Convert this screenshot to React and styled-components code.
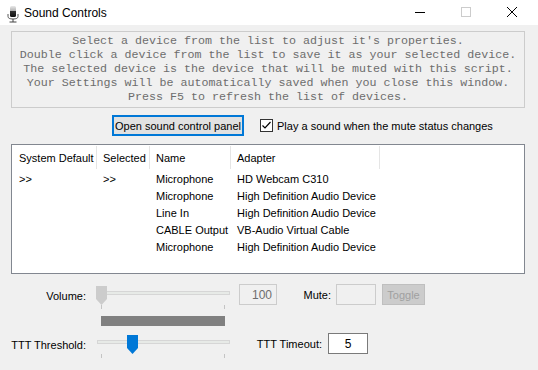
import React from 'react'
import styled, { createGlobalStyle } from 'styled-components'

const GlobalStyle = createGlobalStyle`
    body {
        margin: 0;
        background: #f0f0f0;
        font-family: "Liberation Sans", Arial, sans-serif;
        font-size: 11px;
        color: #000000;
    }
`

const devices = [
    { systemDefault: '>>', selected: '>>', name: 'Microphone', adapter: 'HD Webcam C310' },
    { systemDefault: '', selected: '', name: 'Microphone', adapter: 'High Definition Audio Device' },
    { systemDefault: '', selected: '', name: 'Line In', adapter: 'High Definition Audio Device' },
    { systemDefault: '', selected: '', name: 'CABLE Output', adapter: 'VB-Audio Virtual Cable' },
    { systemDefault: '', selected: '', name: 'Microphone', adapter: 'High Definition Audio Device' },
]

const infoLines = [
    "Select a device from the list to adjust it's properties.",
    'Double click a device from the list to save it as your selected device.',
    'The selected device is the device that will be muted with this script.',
    'Your Settings will be automatically saved when you close this window.',
    'Press F5 to refresh the list of devices.',
]

const MicIcon = () => (
    <svg width="16" height="18" viewBox="0 0 16 18">
        <defs>
            <linearGradient id="cap" x1="0" y1="0" x2="0" y2="1">
                <stop offset="0" stopColor="#e8e8e8" />
                <stop offset="0.45" stopColor="#b0b0b0" />
                <stop offset="0.5" stopColor="#303030" />
                <stop offset="1" stopColor="#101010" />
            </linearGradient>
        </defs>
        <rect x="5" y="1" width="6" height="11" rx="1.5" fill="url(#cap)" />
        <path d="M3 9 V11.5 Q3 14 8 14 Q13 14 13 11.5 V9" fill="none" stroke="#555" strokeWidth="1" />
        <path d="M8 14 V17 M4.5 17 H11.5" stroke="#444" strokeWidth="1" />
    </svg>
)

const Thumb = ({ disabled }) => (
    <svg width="11" height="19" viewBox="0 0 11 19">
        <polygon points="0,0 11,0 11,13 5.5,19 0,13" fill={disabled ? '#cccccc' : '#0078d7'} />
    </svg>
)

const Slider = ({ value, disabled }) => (
    <SliderBox>
        <Track />
        <ThumbHolder style={{ left: `${value * 123}px` }}>
            <Thumb disabled={disabled} />
        </ThumbHolder>
        <Tick $pos={5} />
        <Tick $pos={128} />
    </SliderBox>
)

const App = () => {
    return (
        <Window>
            <GlobalStyle />
            <TitleBar>
                <TitleIcon><MicIcon /></TitleIcon>
                <Title>Sound Controls</Title>
                <Caption>
                    <CaptionButton>
                        <svg width="10" height="10"><path d="M0 5.5 H10" stroke="#000" /></svg>
                    </CaptionButton>
                    <CaptionButton>
                        <svg width="10" height="10"><rect x="0.5" y="0.5" width="9" height="9" fill="none" stroke="#cccccc" /></svg>
                    </CaptionButton>
                    <CaptionButton>
                        <svg width="10" height="10"><path d="M0 0 L10 10 M10 0 L0 10" stroke="#000" /></svg>
                    </CaptionButton>
                </Caption>
            </TitleBar>

            <Body>
                <InfoBox>
                    {infoLines.map(line => <div key={line}>{line}</div>)}
                </InfoBox>

                <Toolbar>
                    <PanelButton>Open sound control panel</PanelButton>
                    <CheckLabel>
                        <CheckBox>
                            <svg width="11" height="11" viewBox="0 0 11 11">
                                <path d="M1.5 5.5 L4 8 L9.5 2" fill="none" stroke="#000" strokeWidth="1.2" />
                            </svg>
                        </CheckBox>
                        Play a sound when the mute status changes
                    </CheckLabel>
                </Toolbar>

                <DeviceList>
                    <HeaderRow>
                        <HeaderCell>System Default</HeaderCell>
                        <HeaderCell>Selected</HeaderCell>
                        <HeaderCell>Name</HeaderCell>
                        <HeaderCell>Adapter</HeaderCell>
                    </HeaderRow>
                    {devices.map((d, i) => (
                        <DeviceRow key={i}>
                            <Cell>{d.systemDefault}</Cell>
                            <Cell>{d.selected}</Cell>
                            <Cell>{d.name}</Cell>
                            <Cell>{d.adapter}</Cell>
                        </DeviceRow>
                    ))}
                </DeviceList>

                <Controls>
                    <ControlRow>
                        <FieldLabel>Volume:</FieldLabel>
                        <Slider value={0} disabled />
                        <NumberBox $disabled $width={38} $ml={8}>100</NumberBox>
                        <InlineLabel $width={54}>Mute:</InlineLabel>
                        <NumberBox $disabled $width={40} $ml={5} />
                        <ToggleButton>Toggle</ToggleButton>
                    </ControlRow>
                    <LevelBar />
                    <ControlRow>
                        <FieldLabel>TTT Threshold:</FieldLabel>
                        <Slider value={0.25} />
                        <InlineLabel $width={91}>TTT Timeout:</InlineLabel>
                        <NumberBox $width={40} $ml={6} $center>5</NumberBox>
                    </ControlRow>
                </Controls>
            </Body>
        </Window>
    )
}

export default App

const Window = styled.div`
    width: 538px;
    height: 370px;
    display: flex;
    flex-direction: column;
    background: #f0f0f0;
    overflow: hidden;
    white-space: nowrap;
`

const TitleBar = styled.div`
    height: 25px;
    background: #ffffff;
    display: flex;
    align-items: center;
`

const TitleIcon = styled.div`
    width: 16px;
    height: 18px;
    margin-left: 5px;
    margin-top: 2px;
`

const Title = styled.div`
    margin-left: 3px;
    font-size: 12px;
`

const Caption = styled.div`
    margin-left: auto;
    display: flex;
    height: 100%;
    margin-right: 3px;
`

const CaptionButton = styled.div`
    width: 46px;
    display: flex;
    align-items: center;
    justify-content: center;
    padding-bottom: 2px;
`

const Body = styled.div`
    display: flex;
    flex-direction: column;
    padding: 6px 12px 0 11px;
`

const InfoBox = styled.div`
    width: 512px;
    border: 1px solid #cccccc;
    padding: 2px 0 3px;
    font-family: "Liberation Mono", "Courier New", monospace;
    font-size: 11.67px;
    line-height: 14px;
    color: #6d6d6d;
    text-align: center;
    white-space: pre;
`

const Toolbar = styled.div`
    display: flex;
    align-items: center;
    margin-top: 7px;
    padding-left: 101px;
    height: 21px;
`

const PanelButton = styled.div`
    box-sizing: border-box;
    width: 132px;
    height: 21px;
    border: 2px solid #0078d7;
    background: #e1e1e1;
    display: flex;
    align-items: center;
    justify-content: center;
`

const CheckLabel = styled.label`
    display: flex;
    align-items: center;
    margin-left: 16px;
    gap: 4px;
`

const CheckBox = styled.span`
    box-sizing: border-box;
    width: 13px;
    height: 13px;
    border: 1px solid #333333;
    background: #ffffff;
    display: flex;
    align-items: center;
    justify-content: center;
`

const DeviceList = styled.div`
    box-sizing: border-box;
    margin-top: 8px;
    width: 514px;
    height: 130px;
    border: 1px solid #828790;
    background: #ffffff;
    padding-left: 1px;
`

const columns = '84px 53px 81px 149px'

const HeaderRow = styled.div`
    display: grid;
    grid-template-columns: ${columns};
    height: 25px;
    align-items: stretch;
`

const HeaderCell = styled.div`
    display: flex;
    align-items: center;
    padding-left: 6px;
    margin-top: 1px;
    margin-bottom: 1px;
    border-right: 1px solid #e5e5e5;
`

const DeviceRow = styled.div`
    display: grid;
    grid-template-columns: ${columns};
    height: 17px;
    align-items: center;
`

const Cell = styled.div`
    padding-left: 6px;
`

const Controls = styled.div`
    display: flex;
    flex-direction: column;
    margin-top: 10px;
    margin-left: -11px;
`

const ControlRow = styled.div`
    display: flex;
    align-items: flex-start;
    height: 21px;
`

const FieldLabel = styled.div`
    width: 86px;
    text-align: right;
    line-height: 21px;
    padding-top: 2px;
`

const SliderBox = styled.div`
    position: relative;
    width: 135px;
    height: 25px;
    margin-left: 10px;
    margin-top: 2px;
`

const Track = styled.div`
    position: absolute;
    left: 1px;
    right: 1px;
    top: 5px;
    height: 2px;
    background: #e7eae7;
    border: 1px solid #d6d6d6;
`

const ThumbHolder = styled.div`
    position: absolute;
    top: 0;
    height: 19px;
`

const Tick = styled.div`
    position: absolute;
    top: 19px;
    left: ${p => p.$pos}px;
    width: 1px;
    height: 4px;
    background: #c4c4c4;
`

const NumberBox = styled.div`
    box-sizing: border-box;
    width: ${p => p.$width}px;
    height: 21px;
    margin-left: ${p => p.$ml}px;
    border: 1px solid ${p => (p.$disabled ? '#cccccc' : '#7a7a7a')};
    background: ${p => (p.$disabled ? '#f0f0f0' : '#ffffff')};
    color: ${p => (p.$disabled ? '#6d6d6d' : '#000000')};
    display: flex;
    align-items: center;
    justify-content: ${p => (p.$center ? 'center' : 'flex-end')};
    padding: 0 4px;
    font-size: 12px;
`

const InlineLabel = styled.div`
    width: ${p => p.$width}px;
    text-align: right;
    line-height: 21px;
    padding-top: 1px;
`

const ToggleButton = styled.div`
    box-sizing: border-box;
    width: 43px;
    height: 21px;
    margin-left: 6px;
    border: 1px solid #bfbfbf;
    background: #cccccc;
    color: #a0a0a0;
    display: flex;
    align-items: center;
    justify-content: center;
`

const LevelBar = styled.div`
    width: 124px;
    height: 10px;
    margin: 11px 0 7px 101px;
    background: #808080;
`
